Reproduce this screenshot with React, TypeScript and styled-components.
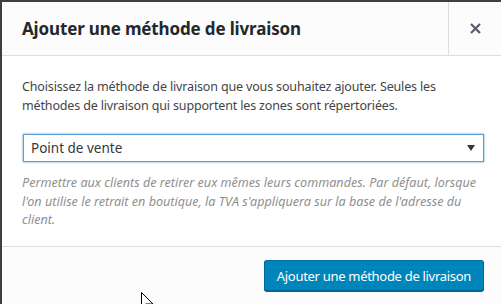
import React from "react";
import styled, { createGlobalStyle } from "styled-components";

const Global = createGlobalStyle`
  html, body { margin: 0; padding: 0; }
  body {
    background: #3f3f3f;
    width: 501px;
    height: 304px;
    overflow: hidden;
    font-family: "Noto Sans", "Open Sans", sans-serif;
  }
`;

const Backdrop = styled.div`
  position: relative;
  padding: 2px 0 0 2px;
  height: 304px;
  box-sizing: border-box;
`;

const Modal = styled.div`
  background: #fff;
  display: flex;
  flex-direction: column;
  height: 302px;
`;

const Header = styled.header`
  display: flex;
  align-items: stretch;
  height: 53px;
  background: #fcfcfc;
  border-bottom: 1px solid #dddddd;
`;

const Title = styled.h1`
  flex: 1;
  margin: 0;
  padding: 0 0 0 20px;
  display: flex;
  align-items: center;
  font-size: 17px;
  font-weight: 700;
  color: #23282d;
  letter-spacing: -0.15px;
`;

const CloseButton = styled.button`
  width: 53px;
  border: none;
  border-left: 1px solid #dddddd;
  background: transparent;
  display: flex;
  align-items: center;
  justify-content: center;
  padding: 0;
  color: #666;
`;

const Body = styled.section`
  padding: 21px 17px 0 20px;
  height: 191px;
  box-sizing: border-box;
  border-bottom: 1px solid #dddddd;
`;

const Intro = styled.p`
  margin: 0 0 19px;
  font-size: 12.5px;
  line-height: 19px;
  letter-spacing: -0.15px;
  color: #444;
`;

const SelectBox = styled.div`
  height: 28px;
  box-sizing: border-box;
  border: 1px solid #5b9dd9;
  box-shadow: 0 0 2px rgba(30, 140, 190, 0.8);
  background: #fff;
  display: flex;
  align-items: center;
  justify-content: space-between;
  padding: 0 6px 0 7px;
  margin-left: 1px;
  font-size: 13.5px;
  color: #32373c;
`;

const Caret = styled.span`
  width: 0;
  height: 0;
  border-left: 4px solid transparent;
  border-right: 4px solid transparent;
  border-top: 6px solid #32373c;
  margin-right: 2px;
`;

const Description = styled.p`
  margin: 12px 0 0;
  font-size: 12.6px;
  line-height: 18.5px;
  font-style: italic;
  color: #8f8f8f;
`;

const Footer = styled.footer`
  flex: 1;
  background: #fcfcfc;
  display: flex;
  justify-content: flex-end;
  align-items: flex-start;
  padding: 13px 17px 0 0;
`;

const PrimaryButton = styled.button`
  height: 31px;
  padding: 0 12px;
  background: #0085ba;
  border: 1px solid #0073aa;
  border-color: #0073aa #006799 #006799;
  border-radius: 3px;
  box-shadow: 0 1px 0 #006799;
  color: #fff;
  font-family: inherit;
  font-size: 13px;
  letter-spacing: -0.3px;
`;

const Cursor = styled.svg`
  position: absolute;
  left: 141px;
  top: 292px;
`;

export default function App() {
  return (
    <>
      <Global />
      <Backdrop>
        <Modal>
          <Header>
            <Title>Ajouter une méthode de livraison</Title>
            <CloseButton aria-label="Fermer">
              <svg width="11" height="11" viewBox="0 0 11 11">
                <path d="M1 1 L10 10 M10 1 L1 10" stroke="#555d66" strokeWidth="2.2" />
              </svg>
            </CloseButton>
          </Header>
          <Body>
            <Intro>
              Choisissez la méthode de livraison que vous souhaitez ajouter. Seules les
              méthodes de livraison qui supportent les zones sont répertoriées.
            </Intro>
            <SelectBox>
              <span>Point de vente</span>
              <Caret />
            </SelectBox>
            <Description>
              Permettre aux clients de retirer eux mêmes leurs commandes. Par défaut, lorsque
              l'on utilise le retrait en boutique, la TVA s'appliquera sur la base de l'adresse du
              client.
            </Description>
          </Body>
          <Footer>
            <PrimaryButton>Ajouter une méthode de livraison</PrimaryButton>
          </Footer>
        </Modal>
        <Cursor width="14" height="14" viewBox="0 0 14 14">
          <path d="M0.5 0.5 L0.5 16 L4.5 12 L12 12 Z" fill="#fff" stroke="#000" strokeWidth="1" />
        </Cursor>
      </Backdrop>
    </>
  );
}
